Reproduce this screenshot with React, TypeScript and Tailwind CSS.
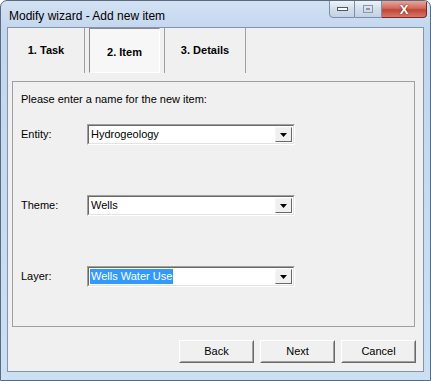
import React from "react";

const ui = "font-['Liberation_Sans',Arial,sans-serif] text-[11px] text-black";

function Combo({ value, selected }: { value: string; selected?: boolean }) {
  return (
    <div className="w-[208px] h-[21px] border border-t-[#a0a0a0] border-l-[#a0a0a0] border-b-white border-r-white">
      <div className="h-full flex border border-t-[#696969] border-l-[#696969] border-b-[#e3e3e3] border-r-[#e3e3e3] bg-white">
        <div className="flex-1 flex items-center pl-[1px]">
          <span className={selected ? "bg-[#3399ff] text-white px-[1px] leading-[15px]" : "px-[1px] leading-[15px]"}>
            {value}
          </span>
        </div>
        <div className="w-[17px] m-[1px] bg-[#f0f0f0] border border-t-[#f6f6f6] border-l-[#f6f6f6] border-b-[#696969] border-r-[#696969] flex items-center justify-center">
          <svg width="7" height="4" viewBox="0 0 7 4">
            <path d="M0 0h7L3.5 4z" fill="#000" />
          </svg>
        </div>
      </div>
    </div>
  );
}

function Field({ label, value, selected }: { label: string; value: string; selected?: boolean }) {
  return (
    <div className="flex items-center">
      <span className="w-[66px]">{label}</span>
      <Combo value={value} selected={selected} />
    </div>
  );
}

function Btn({ children }: { children: React.ReactNode }) {
  return (
    <div className="w-[75px] h-[23px] border border-t-white border-l-white border-b-[#696969] border-r-[#696969]">
      <div className="h-full bg-[#f0f0f0] border border-t-[#f0f0f0] border-l-[#f0f0f0] border-b-[#a0a0a0] border-r-[#a0a0a0] flex items-center justify-center">
        {children}
      </div>
    </div>
  );
}

export default function App() {
  return (
    <div className={`${ui} w-[431px] h-[381px] flex flex-col rounded-t-[7px] border border-[#5a6a80] bg-[linear-gradient(180deg,#d3e2f3_0%,#c2d6ee_8%,#cddff2_100%)] overflow-hidden`}>
      {/* Title bar */}
      <div className="h-[26px] flex items-start justify-between">
        <span className="pl-[8px] pt-[6px] text-[12px] text-black">Modify wizard - Add new item</span>
        <div className="flex mr-[3px] mt-[-1px]">
          <div className="w-[26px] h-[18px] rounded-bl-[4px] border border-[#7c8ea8] bg-[linear-gradient(180deg,#eef3f9,#d3deeb_50%,#c3d1e2)] flex items-center justify-center">
            <div className="w-[11px] h-[4px] border border-[#4b5a70] bg-white" />
          </div>
          <div className="w-[27px] h-[18px] border border-l-0 border-[#7c8ea8] bg-[linear-gradient(180deg,#eef3f9,#d3deeb_50%,#c3d1e2)] flex items-center justify-center">
            <div className="w-[10px] h-[8px] border border-[#8a98ab] flex items-center justify-center">
              <div className="w-[4px] h-[2px] border border-[#8a98ab]" />
            </div>
          </div>
          <div className="w-[45px] h-[18px] rounded-br-[4px] border border-l-0 border-[#7a2a22] bg-[linear-gradient(180deg,#e6a79c,#d2695c_45%,#c04536_55%,#d5786a)] flex items-center justify-center">
            <span className="text-white font-bold text-[13px] leading-none [text-shadow:0_0_2px_#5a1a10]">X</span>
          </div>
        </div>
      </div>

      {/* Client area */}
      <div className="mx-[6px] flex-1 mb-[8px] bg-[#f0f0f0] border border-[#8495ab] flex flex-col">
        {/* Tabs */}
        <div className="h-[45px] flex font-bold">
          <div className="w-[76px] flex items-center justify-center pb-[1px]">1. Task</div>
          <div className="w-[1px] bg-[#a0a0a0]" />
          <div className="w-[4px]" />
          <div className="w-[71px] h-[45px] border border-t-[#8a8a8a] border-l-[#8a8a8a] border-b-white border-r-white bg-[#f7f7f7] flex items-center justify-center pt-[4px]">
            2. Item
          </div>
          <div className="w-[4px]" />
          <div className="w-[1px] bg-[#a0a0a0]" />
          <div className="w-[80px] flex items-center justify-center pb-[1px]">3. Details</div>
          <div className="w-[1px] bg-[#a0a0a0]" />
        </div>

        {/* Panel */}
        <div className="ml-[4px] mr-[8px] mt-[8px] h-[246px] border border-[#a0a0a0] pl-[8px] pt-[11px] flex flex-col">
          <div className="leading-[13px]">Please enter a name for the new item:</div>
          <div className="mt-[18px]">
            <Field label="Entity:" value="Hydrogeology" />
          </div>
          <div className="mt-[50px]">
            <Field label="Theme:" value="Wells" />
          </div>
          <div className="mt-[50px]">
            <Field label="Layer:" value="Wells Water Use" selected />
          </div>
        </div>

        {/* Buttons */}
        <div className="flex justify-end gap-[6px] mt-[13px] mr-[7px]">
          <Btn>Back</Btn>
          <Btn>Next</Btn>
          <Btn>Cancel</Btn>
        </div>
      </div>
    </div>
  );
}
